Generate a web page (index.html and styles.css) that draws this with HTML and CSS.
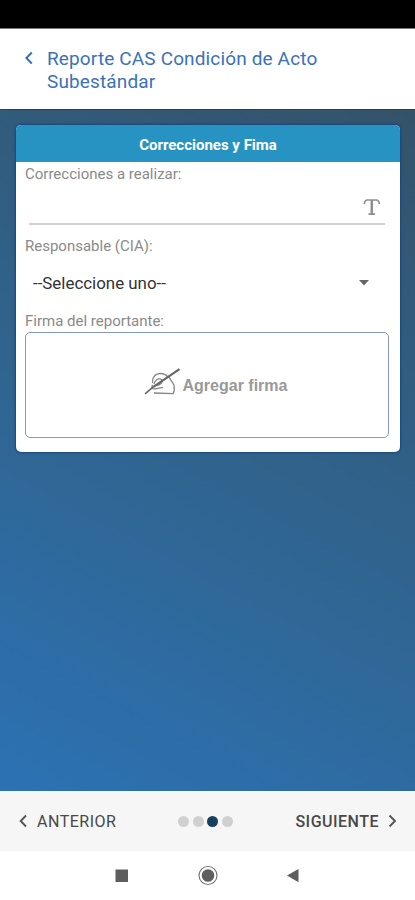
FILE: index.html
```html
<!DOCTYPE html>
<html lang="es">
<head>
<meta charset="utf-8">
<title>Reporte CAS</title>
<link rel="stylesheet" href="styles.css">
</head>
<body>
<div class="status"></div>
<header class="top">
  <svg class="back" width="10" height="14" viewBox="0 0 10 14"><path d="M7.8 1.5 2.4 7l5.4 5.5"/></svg>
  <h1><span class="t1">Reporte CAS Condición de Acto</span><br><span class="t2">Subestándar</span></h1>
</header>
<main>
  <section class="card">
    <h2><span>Correcciones y Fima</span></h2>
    <div class="body">
      <div class="label"><span>Correcciones a realizar:</span></div>
      <div class="input"><svg width="18" height="18" viewBox="0 0 18 18"><path d="M1.300 6Q1.600 2 4.500 2h8.600Q16 2 16.300 6M5.500 16.200h6.600"/><path class="stem" d="M8.800 2v14"/></svg></div>
      <div class="label second"><span>Responsable (CIA):</span></div>
      <div class="select"><span class="value">--Seleccione uno--</span><svg width="10" height="6" viewBox="0 0 10 6"><path d="M0 0h10L5 5.600z"/></svg></div>
      <div class="label"><span>Firma del reportante:</span></div>
      <div class="sign">
        <svg width="37" height="28" viewBox="0 0 37 28">
          <path class="hand" d="M8.500 15C8.300 9.500 11 6.200 15 5.600c4-.4 7 1 8.800 3.200M25 9.200l5 7.800c.6 4 .3 6.500-.8 8.600L10 25M8.500 17c-1.300 2.500-.5 4.300 2.700 3.800l8-1.400M10 16c1-3.500 3.500-5.400 6-5.200 2.500.4 2.800 2.700 1.300 4.400-1.600 1.700-4 2.200-5.800 2"/>
          <path class="pen" d="M1 25.800 9 19.200"/><path class="pen thick" d="M9 19.200 35.500 1.200"/>
        </svg>
        <span>Agregar firma</span>
      </div>
    </div>
  </section>
</main>
<footer>
  <div class="prev"><svg width="9" height="14" viewBox="0 0 9 14"><path d="M7 1.500 1.700 7 7 12.500"/></svg><span>ANTERIOR</span></div>
  <div class="dots"><i></i><i></i><i class="on"></i><i></i></div>
  <div class="next"><span>SIGUIENTE</span><svg width="9" height="14" viewBox="0 0 9 14"><path d="M1.500 1.500 7 7l-5.500 5.500"/></svg></div>
</footer>
<nav>
  <svg width="415" height="49" viewBox="0 0 415 49">
    <rect x="115.500" y="18.500" width="12.500" height="12.500"/>
    <circle class="ring" cx="208" cy="24.500" r="9"/><circle cx="208" cy="24.500" r="6.300"/>
    <path d="M287 24.500 298.500 18v13.300z"/>
  </svg>
</nav>
</body>
</html>
```
FILE: styles.css
```css
* { box-sizing: border-box; }
body {
  margin: 0;
  width: 415px;
  height: 900px;
  display: flex;
  flex-direction: column;
  overflow: hidden;
  background: #fff;
  font-family: Roboto, "Liberation Sans", sans-serif;
}
h1, h2 { margin: 0; }
span { white-space: nowrap; }
.status { height: 29px; background: #000; border-bottom: 1px solid #777; }
.top { height: 80px; display: flex; padding: 19px 0 0 24px; gap: 13px; }
.back { margin-top: 3px; fill: none; stroke: #3a70b8; stroke-width: 2; }
.top h1 { font-size: 19px; line-height: 22.500px; font-weight: 400; color: #3a72b8; }
.t1 { letter-spacing: .14px; }
.t2 { letter-spacing: .14px; }
main {
  height: 682px;
  padding: 15px 15px 0 16px;
  background: linear-gradient(208deg, #33536a 0%, #30648f 52%, #2c72b4 100%);
  border-top: 1px solid #174763;
}
.card { height: 327px; border-radius: 5px; background: #fff; overflow: hidden; box-shadow: 0 0 2px 1px #15497a; }
.card h2 {
  height: 37px;
  background: #2793c3;
  color: #fff;
  font-size: 15px;
  line-height: 41px;
  font-weight: 700;
  text-align: center;
}
.body { padding: 2px 11px 0 9px; }
.label { height: 20px; line-height: 20px; font-size: 15px; color: #8a8a8a; }
.input {
  height: 41px;
  margin: 0 4px;
  border-bottom: 2px solid #d2d2d2;
  display: flex;
  justify-content: flex-end;
  padding: 14px 4px 0 0;
}
.input svg { fill: none; stroke: #8e8e8e; stroke-width: 1.700; }
.input .stem { stroke-width: 2.500; }
.second { margin-top: 11px; }
.select { height: 55px; padding: 0 20px 2px 8px; display: flex; align-items: center; justify-content: space-between; font-size: 16.900px; color: #333; }
.select svg { fill: #666; }
.sign {
  height: 106px;
  margin-top: 1px;
  padding: 1px 0 0 17px;
  border: 1px solid #8498c4;
  border-radius: 5px;
  display: flex;
  justify-content: center;
  align-items: center;
  gap: 2px;
  font: 700 16px "Liberation Sans", sans-serif;
  color: #999;
}
.sign svg { margin-top: -7px; }
.hand { fill: none; stroke: #858585; stroke-width: 1.300; }
.pen { stroke: #666; stroke-width: 1.500; }
.thick { stroke-width: 2.200; }
footer { height: 60px; display: flex; align-items: center; justify-content: space-between; padding: 0 18px 0 19px; background: #f6f6f6; font-size: 16px; letter-spacing: .5px; color: #484848; }
footer svg { fill: none; stroke: #555; stroke-width: 1.900; }
.prev, .next { display: flex; align-items: center; gap: 9px; }
.next { font-weight: 500; }
.dots { display: flex; gap: 3.700px; margin-right: 1px; }
.dots i { width: 11px; height: 11px; border-radius: 50%; background: #d0d0d0; }
.dots .on { background: #173f5f; }
nav { height: 49px; background: #fff; }
nav svg { display: block; fill: #5e5e5e; }
nav .ring { fill: none; stroke: #777; stroke-width: 1.200; }
```
